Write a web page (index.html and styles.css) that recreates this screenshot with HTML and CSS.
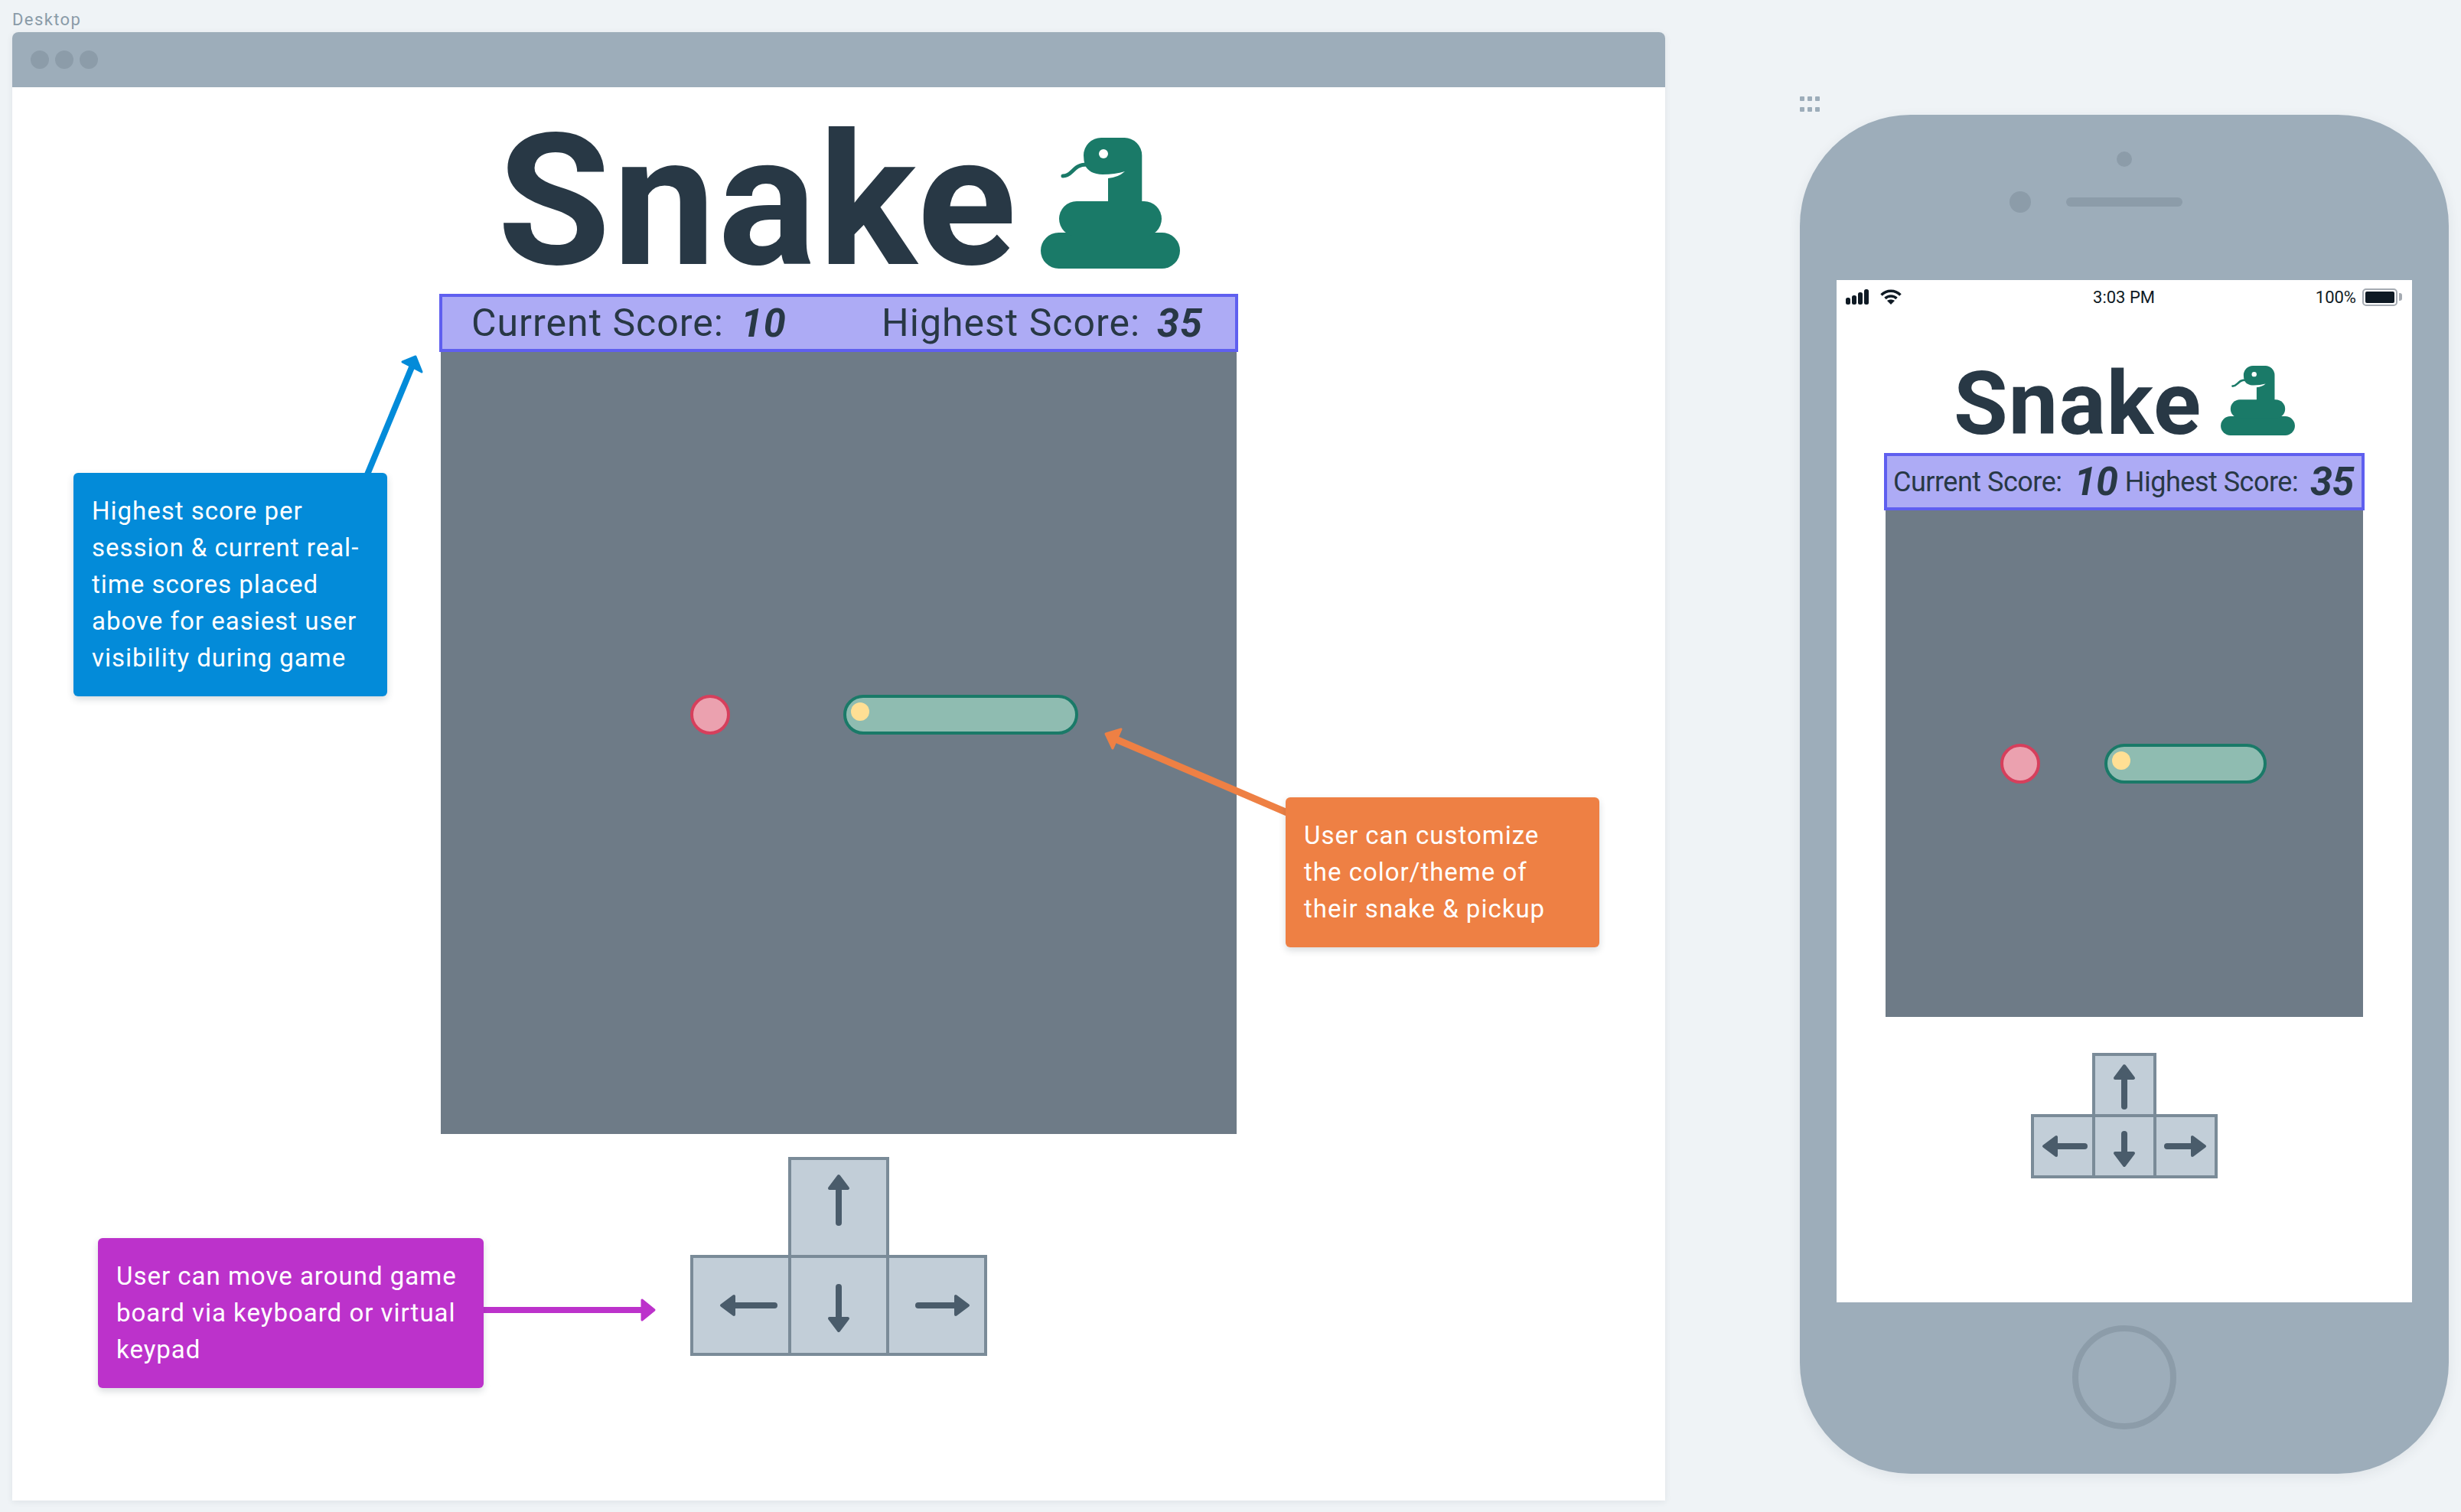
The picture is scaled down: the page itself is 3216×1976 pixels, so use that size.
FILE: index.html
```html
<!DOCTYPE html>
<html lang="en">
<head>
    <meta charset="UTF-8">
    <title>Snake wireframes</title>
    <link rel="stylesheet" href="styles.css">
</head>
<body>

<!-- Desktop artboard -->
<div class="desktop">
    <div class="artboard-label">Desktop</div>
    <div class="window">
        <div class="window-bar">
            <span class="window-dot"></span>
            <span class="window-dot"></span>
            <span class="window-dot"></span>
        </div>

        <div class="game">
            <div class="title-row">
                <h1 class="title">Snake</h1>
                <svg class="snake-icon" viewBox="0 0 182 171">
                    <rect x="0" y="124" width="182" height="47" rx="23.5" fill="#1a7a68"/>
                    <rect x="24" y="83" width="134" height="46" rx="23" fill="#1a7a68"/>
                    <path d="M79 0H109A23 23 0 0 1 132.300 23V90H88V53Q101 52 110 44Q97 48 81 48C69 48 61 43 58 36Q56 30 56 23A23 23 0 0 1 79 0Z" fill="#1a7a68"/>
                    <circle cx="82" cy="21" r="6" fill="#fff"/>
                    <path d="M60 35C50 35 46 39 41 44C36 49 33 50 29 50" fill="none" stroke="#1a7a68" stroke-width="5" stroke-linecap="round"/>
                </svg>
            </div>

            <div class="score-bar">
                <div class="score">Current Score: <b class="score-value">10</b></div>
                <div class="score">Highest Score: <b class="score-value">35</b></div>
            </div>

            <div class="board">
                <span class="pickup"></span>
                <span class="snake"><span class="snake-eye"></span></span>
            </div>

            <div class="keypad">
                <div class="key key-up">
                    <svg viewBox="4 4 124 124"><path d="M66 86V44" class="shaft"/><path d="M66 25L78 41H54Z" class="head"/></svg>
                </div>
                <div class="key key-left">
                    <svg viewBox="4 4 124 124"><path d="M110 66H58" class="shaft"/><path d="M41 66L57 54V78Z" class="head"/></svg>
                </div>
                <div class="key key-down">
                    <svg viewBox="4 4 124 124"><path d="M66 42V84" class="shaft"/><path d="M66 99L78 83H54Z" class="head"/></svg>
                </div>
                <div class="key key-right">
                    <svg viewBox="4 4 124 124"><path d="M42 66H90" class="shaft"/><path d="M107 66L91 54V78Z" class="head"/></svg>
                </div>
            </div>
        </div>

        <!-- Annotations sit on top of the artboard -->
        <svg class="arrows" viewBox="16 42 2160 1919">
            <path d="M480 620L538 480" stroke="#038bd9" stroke-width="8" fill="none"/>
            <path d="M543 466L526 473L551 486Z" fill="#038bd9" stroke="#038bd9" stroke-width="3" stroke-linejoin="round"/>
            <path d="M1682 1062L1458 966" stroke="#ee8044" stroke-width="9" fill="none"/>
            <path d="M1445 959L1465 953L1454 978Z" fill="#ee8044" stroke="#ee8044" stroke-width="3" stroke-linejoin="round"/>
            <path d="M630 1712H840" stroke="#bc32cb" stroke-width="8" fill="none"/>
            <path d="M855 1712L839 1699V1725Z" fill="#bc32cb" stroke="#bc32cb" stroke-width="3" stroke-linejoin="round"/>
        </svg>

        <div class="note note-blue">Highest score per<br>session &amp; current real-<br>time scores placed<br>above for easiest user<br>visibility during game</div>
        <div class="note note-orange">User can customize<br>the color/theme of<br>their snake &amp; pickup</div>
        <div class="note note-purple">User can move around game<br>board via keyboard or virtual<br>keypad</div>
    </div>
</div>

<!-- Mobile artboard -->
<div class="mobile">
    <div class="grip">
        <span></span><span></span><span></span>
        <span></span><span></span><span></span>
    </div>
    <div class="phone">
        <span class="phone-sensor"></span>
        <div class="phone-top">
            <span class="phone-camera"></span>
            <span class="phone-speaker"></span>
        </div>

        <div class="screen">
            <div class="status-bar">
                <div class="status-left">
                    <svg class="signal" viewBox="0 0 30 20">
                        <rect x="0" y="11" width="6" height="9" rx="2.500"/>
                        <rect x="8" y="8" width="6" height="12" rx="2.500"/>
                        <rect x="16" y="4" width="6" height="16" rx="2.500"/>
                        <rect x="24" y="0" width="6" height="20" rx="2.500"/>
                    </svg>
                    <svg class="wifi" viewBox="0 0 28 20">
                        <path d="M1.500 7.500C8.500 0.500 19.500 0.500 26.500 7.500" fill="none" stroke="#0f1a24" stroke-width="3.500"/>
                        <path d="M6.500 12C10.500 8 17.500 8 21.500 12" fill="none" stroke="#0f1a24" stroke-width="3.500"/>
                        <path d="M14 20L9 15C12 13 16 13 19 15Z" fill="#0f1a24"/>
                    </svg>
                </div>
                <div class="status-time">3:03 PM</div>
                <div class="status-right">
                    <span class="status-battery-text">100%</span>
                    <span class="battery"><span class="battery-fill"></span></span>
                    <span class="battery-nub"></span>
                </div>
            </div>

            <div class="title-row title-row-small">
                <h1 class="title">Snake</h1>
                <svg class="snake-icon" viewBox="0 0 182 171">
                    <rect x="0" y="124" width="182" height="47" rx="23.5" fill="#1a7a68"/>
                    <rect x="24" y="83" width="134" height="46" rx="23" fill="#1a7a68"/>
                    <path d="M79 0H109A23 23 0 0 1 132.300 23V90H88V53Q101 52 110 44Q97 48 81 48C69 48 61 43 58 36Q56 30 56 23A23 23 0 0 1 79 0Z" fill="#1a7a68"/>
                    <circle cx="82" cy="21" r="6" fill="#fff"/>
                    <path d="M60 35C50 35 46 39 41 44C36 49 33 50 29 50" fill="none" stroke="#1a7a68" stroke-width="5" stroke-linecap="round"/>
                </svg>
            </div>

            <div class="score-bar score-bar-small">
                <div class="score">Current Score: <b class="score-value">10</b></div>
                <div class="score">Highest Score: <b class="score-value">35</b></div>
            </div>

            <div class="board board-small">
                <span class="pickup"></span>
                <span class="snake"><span class="snake-eye"></span></span>
            </div>

            <div class="keypad keypad-small">
                <div class="key key-up">
                    <svg viewBox="4 4 76 76"><path d="M42 70V36" class="shaft"/><path d="M42 17L54 33H30Z" class="head"/></svg>
                </div>
                <div class="key key-left">
                    <svg viewBox="4 4 76 76"><path d="M70 42H34" class="shaft"/><path d="M17 42L33 30V54Z" class="head"/></svg>
                </div>
                <div class="key key-down">
                    <svg viewBox="4 4 76 76"><path d="M42 26V52" class="shaft"/><path d="M42 67L54 51H30Z" class="head"/></svg>
                </div>
                <div class="key key-right">
                    <svg viewBox="4 4 76 76"><path d="M18 42H50" class="shaft"/><path d="M67 42L51 30V54Z" class="head"/></svg>
                </div>
            </div>
        </div>

        <span class="home-button"></span>
    </div>
</div>

</body>
</html>
```

FILE: styles.css
```css
* {
    box-sizing: border-box;
}

body {
    margin: 0;
    width: 3216px;
    height: 1976px;
    display: flex;
    overflow: hidden;
    background-color: #eff3f6;
    font-family: Roboto, "Liberation Sans", sans-serif;
    color: #283845;
}

/* Desktop artboard */
.desktop {
    width: 2160px;
    margin-left: 16px;
}

.artboard-label {
    height: 42px;
    padding-top: 13px;
    font-size: 22px;
    line-height: 26px;
    letter-spacing: 1.4px;
    color: #8a9ba8;
}

.window {
    position: relative;
    height: 1919px;
    background-color: #fff;
    border-radius: 8px 8px 0 0;
    box-shadow: 0 2px 8px rgba(40, 56, 69, 0.08);
}

.window-bar {
    height: 72px;
    display: flex;
    align-items: center;
    gap: 8px;
    padding: 0 24px;
    background-color: #9dadba;
    border-radius: 8px 8px 0 0;
}

.window-dot {
    width: 24px;
    height: 24px;
    border-radius: 50%;
    background-color: #8c9ca9;
}

/* Game column, shared by both artboards */
.game {
    display: flex;
    flex-direction: column;
    align-items: center;
}

.title-row {
    height: 270px;
    display: flex;
    justify-content: center;
    align-items: flex-start;
    gap: 29px;
    padding-top: 29px;
}

.title {
    margin: 0;
    font-size: 240px;
    line-height: 1;
    font-weight: 700;
    letter-spacing: 3px;
}

.snake-icon {
    width: 182px;
    height: 171px;
    margin-top: 37px;
}

.score-bar {
    width: 1044px;
    height: 76px;
    display: flex;
    justify-content: space-between;
    align-items: center;
    padding: 0 42px 0 38px;
    background-color: #adabf5;
    border: 4px solid #5f5fef;
}

.score {
    display: flex;
    align-items: center;
    gap: 22px;
    font-size: 50px;
    letter-spacing: 1px;
}

.score-value {
    font-size: 52px;
    font-style: italic;
    font-weight: 700;
}

.board {
    width: 1040px;
    height: 1022px;
    display: flex;
    align-items: flex-start;
    gap: 148px;
    padding: 448px 0 0 326px;
    background-color: #6e7b87;
}

.pickup {
    width: 52px;
    height: 52px;
    border-radius: 50%;
    background-color: #eba1af;
    border: 4px solid #d63f5c;
}

.snake {
    width: 307px;
    height: 52px;
    padding: 6px;
    border-radius: 26px;
    background-color: #8fbcb1;
    border: 4px solid #1a7a68;
}

.snake-eye {
    display: block;
    width: 24px;
    height: 24px;
    border-radius: 50%;
    background-color: #ffdf94;
}

.keypad {
    display: grid;
    grid-template-columns: repeat(3, 128px);
    grid-template-rows: repeat(2, 128px);
    width: 388px;
    height: 260px;
    margin-top: 30px;
}

.key {
    width: 132px;
    height: 132px;
    background-color: #c2ced8;
    border: 4px solid #7a8b98;
}

.key-up {
    grid-column: 2;
    grid-row: 1;
}

.key-left {
    grid-column: 1;
    grid-row: 2;
}

.key-down {
    grid-column: 2;
    grid-row: 2;
}

.key-right {
    grid-column: 3;
    grid-row: 2;
}

.key svg {
    display: block;
    width: 100%;
    height: 100%;
}

.shaft {
    fill: none;
    stroke: #4a5c6b;
    stroke-width: 8;
    stroke-linecap: round;
}

.head {
    fill: #4a5c6b;
    stroke: #4a5c6b;
    stroke-width: 4;
    stroke-linejoin: round;
}

/* Annotations */
.arrows {
    position: absolute;
    top: 0;
    left: 0;
    width: 2160px;
    height: 1919px;
}

.note {
    position: absolute;
    padding: 0 24px;
    border-radius: 6px;
    color: #fff;
    font-size: 33px;
    line-height: 48px;
    letter-spacing: 1px;
    white-space: nowrap;
    box-shadow: 0 4px 10px rgba(40, 56, 69, 0.18);
}

.note-blue {
    left: 80px;
    top: 576px;
    width: 410px;
    height: 292px;
    padding-top: 26px;
    background-color: #038bd9;
}

.note-orange {
    left: 1664px;
    top: 1000px;
    width: 410px;
    height: 196px;
    padding-top: 26px;
    background-color: #ee8044;
}

.note-purple {
    left: 112px;
    top: 1576px;
    width: 504px;
    height: 196px;
    padding-top: 26px;
    background-color: #bc32cb;
}

/* Mobile artboard */
.mobile {
    width: 848px;
    margin-left: 176px;
    padding-top: 126px;
}

.grip {
    display: grid;
    grid-template-columns: repeat(3, 6px);
    gap: 4px;
    height: 24px;
}

.grip span {
    height: 6px;
    border-radius: 1px;
    background-color: #9dadba;
}

.phone {
    width: 848px;
    height: 1776px;
    display: flex;
    flex-direction: column;
    align-items: center;
    padding-top: 48px;
    border-radius: 145px;
    background-color: #9dadba;
    box-shadow: 0 4px 16px rgba(40, 56, 69, 0.08);
}

.phone-sensor {
    width: 20px;
    height: 20px;
    border-radius: 50%;
    background-color: #8c9ca9;
}

.phone-top {
    display: grid;
    grid-template-columns: 1fr 152px 1fr;
    align-items: center;
    width: 100%;
    margin-top: 32px;
}

.phone-camera {
    justify-self: end;
    width: 28px;
    height: 28px;
    margin-right: 46px;
    border-radius: 50%;
    background-color: #8c9ca9;
}

.phone-speaker {
    height: 12px;
    border-radius: 6px;
    background-color: #8c9ca9;
}

.screen {
    width: 752px;
    height: 1336px;
    margin-top: 88px;
    display: flex;
    flex-direction: column;
    align-items: center;
    background-color: #fff;
}

.status-bar {
    width: 100%;
    display: flex;
    justify-content: space-between;
    align-items: center;
    height: 40px;
    padding: 4px 13px 0 12px;
    color: #0f1a24;
    font-size: 22px;
}

.status-left {
    display: flex;
    gap: 15px;
    width: 240px;
}

.signal {
    width: 30px;
    height: 20px;
    fill: #0f1a24;
}

.wifi {
    width: 28px;
    height: 20px;
}

.status-right {
    width: 240px;
    display: flex;
    justify-content: flex-end;
    align-items: center;
}

.status-battery-text {
    margin-right: 8px;
}

.battery {
    width: 46px;
    height: 23px;
    padding: 2px;
    border: 2px solid #a5abb2;
    border-radius: 5px;
}

.battery-fill {
    display: block;
    height: 100%;
    border-radius: 2px;
    background-color: #0f1a24;
}

.battery-nub {
    width: 4px;
    height: 10px;
    margin-left: 2px;
    border-radius: 0 3px 3px 0;
    background-color: #a5abb2;
}

.title-row-small {
    height: 186px;
    gap: 25px;
    padding-top: 64px;
}

.title-row-small .title {
    font-size: 115px;
    letter-spacing: 1px;
}

.title-row-small .snake-icon {
    width: 97px;
    height: 91px;
    margin-top: 8px;
}

.score-bar-small {
    width: 628px;
    height: 75px;
    padding: 0 10px 0 8px;
}

.score-bar-small .score {
    gap: 16px;
    font-size: 36px;
    letter-spacing: -0.5px;
}

.board-small {
    width: 624px;
    height: 662px;
    gap: 84px;
    padding: 305px 0 0 150px;
}

.board-small .snake {
    width: 212px;
}

.keypad-small {
    grid-template-columns: repeat(3, 80px);
    grid-template-rows: repeat(2, 80px);
    width: 244px;
    height: 164px;
    margin-top: 47px;
}

.keypad-small .key {
    width: 84px;
    height: 84px;
}

.home-button {
    width: 136px;
    height: 136px;
    margin-top: 30px;
    border-radius: 50%;
    border: 8px solid #8c9ca9;
}
```
